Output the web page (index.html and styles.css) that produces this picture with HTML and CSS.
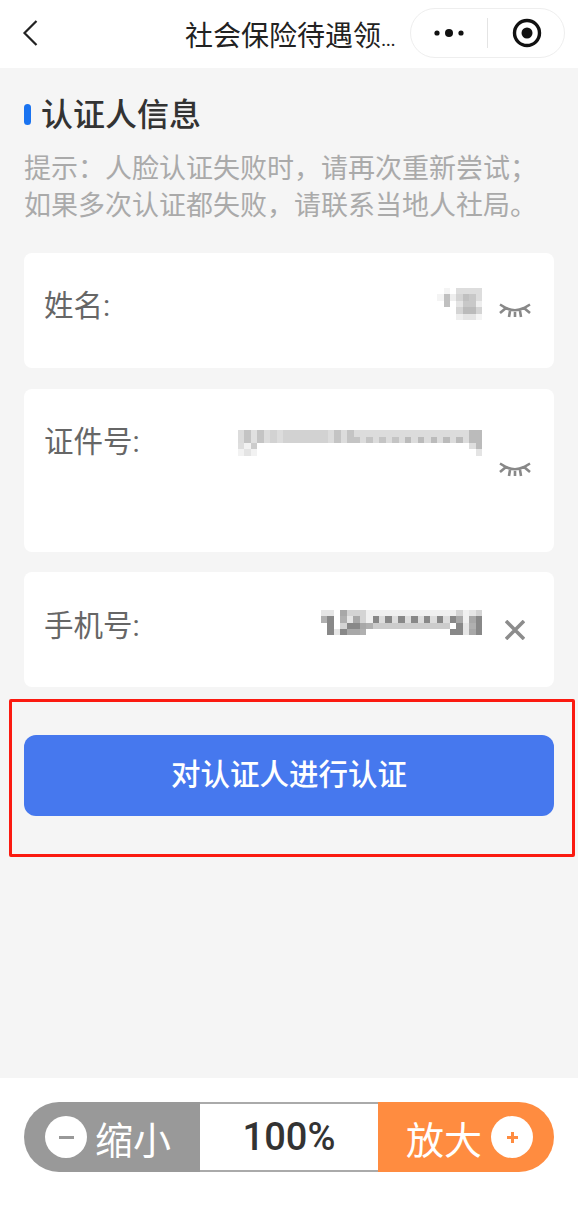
FILE: index.html
```html
<!DOCTYPE html>
<html lang="zh-CN">
<head>
    <meta charset="UTF-8">
    <meta name="viewport" content="width=device-width, initial-scale=1.0">
    <title>社会保险待遇领取</title>
    <link rel="stylesheet" href="styles.css">
</head>
<body>
    <div class="page">
        <div class="nav-bar">
            <svg class="nav-back" width="16" height="28" viewBox="0 0 16 28"><path d="M14.5 2 L2.5 14 L14.5 26" fill="none" stroke="#222" stroke-width="2.2"/></svg>
            <div class="nav-title">社会保险待遇领<span class="nav-dots">...</span></div>
            <div class="capsule">
                <svg class="capsule-dots" width="32" height="10" viewBox="0 0 32 10"><circle cx="4" cy="5" r="2.6" fill="#111"/><circle cx="16" cy="5" r="4" fill="#111"/><circle cx="28" cy="5" r="2.6" fill="#111"/></svg>
                <div class="capsule-line"></div>
                <svg class="capsule-target" width="30" height="30" viewBox="0 0 30 30"><circle cx="15" cy="15" r="12.5" fill="none" stroke="#111" stroke-width="3.4"/><circle cx="15" cy="15" r="5.5" fill="#111"/></svg>
            </div>
        </div>

        <div class="main">
            <div class="section-title">认证人信息</div>
            <div class="hint">提示：人脸认证失败时，请再次重新尝试；<br>如果多次认证都失败，请联系当地人社局。</div>

            <div class="card card-name">
                <div class="card-label">姓名:</div>
                <!-- 打码的姓名 -->
                <svg class="mosaic mosaic-name" width="45" height="32" viewBox="0 0 7 5" shape-rendering="crispEdges">
                    <path fill="#f4f4f4" d="M1 0h1v1h-1z M0 1h1v1h-1z M6 4h1v1h-1z"/>
                    <path fill="#dddddd" d="M3 0h4v1h-4z M6 1h1v1h-1z"/>
                    <path fill="#c0c0c0" d="M1 1h1v2h-1z M4 1h1v1h-1z"/>
                    <path fill="#eeeeee" d="M2 1h1v1h-1z M6 2h1v1h-1z M3 4h1v1h-1z"/>
                    <path fill="#d4d4d4" d="M3 1h1v1h-1z M3 3h1v1h-1z M6 3h1v1h-1z"/>
                    <path fill="#c8c8c8" d="M5 1h1v1h-1z M4 2h2v1h-2z"/>
                    <path fill="#e4e4e4" d="M3 2h1v1h-1z M4 4h2v1h-2z"/>
                    <path fill="#bbbbbb" d="M4 3h2v1h-2z"/>
                </svg>
                <svg class="eye" width="32" height="15" viewBox="0 0 32 15"><path d="M1 1.5 L7 5 Q16 9.5 25 5 L31 1.5 M1 10 L7 5 M31 10 L25 5 M11 8 L10 14 M16 9 L16 14 M21 8 L22 14" fill="none" stroke="#888" stroke-width="2.6"/></svg>
            </div>

            <div class="card card-id">
                <div class="card-label">证件号:</div>
                <!-- 打码的证件号 -->
                <svg class="mosaic mosaic-id" width="244" height="26" viewBox="0 0 38 4" shape-rendering="crispEdges">
                    <path fill="#dcdcdc" d="M0 0h1v2h-1z M4 0h1v2h-1z M6 0h1v2h-1z M14 0h1v2h-1z M16 0h1v2h-1z M18 0h20v1h-20z M19 1h1v1h-1z M21 1h1v1h-1z M23 1h1v1h-1z M25 1h1v1h-1z M27 1h1v1h-1z M29 1h1v1h-1z M31 1h1v1h-1z M33 1h1v1h-1z M35 1h1v1h-1z"/>
                    <path fill="#c4c4c4" d="M1 0h1v2h-1z M3 0h1v2h-1z M15 0h1v2h-1z M17 0h1v2h-1z M18 1h1v1h-1z M20 1h1v1h-1z M22 1h1v1h-1z M24 1h1v1h-1z"/>
                    <path fill="#bbbbbb" d="M26 1h1v1h-1z M28 1h1v1h-1z M30 1h1v1h-1z M32 1h1v1h-1z M34 1h1v1h-1z M36 0h2v2h-2z M37 2h1v1h-1z"/>
                    <path fill="#e0e0e0" d="M2 0h1v2h-1z"/>
                    <path fill="#d2d2d2" d="M5 0h1v2h-1z M7 0h7v2h-7z"/>
                    <path fill="#dedede" d="M0 2h1v1h-1z M36 2h1v1h-1z"/>
                    <path fill="#cccccc" d="M2 2h1v1h-1z"/>
                    <path fill="#f2f2f2" d="M1 2h1v1h-1z M0 3h1v1h-1z M2 3h1v1h-1z"/>
                    <path fill="#e4e4e4" d="M1 3h1v1h-1z M37 3h1v1h-1z"/>
                </svg>
                <svg class="eye" width="32" height="15" viewBox="0 0 32 15"><path d="M1 1.5 L7 5 Q16 9.5 25 5 L31 1.5 M1 10 L7 5 M31 10 L25 5 M11 8 L10 14 M16 9 L16 14 M21 8 L22 14" fill="none" stroke="#888" stroke-width="2.6"/></svg>
            </div>

            <div class="card card-phone">
                <div class="card-label">手机号:</div>
                <!-- 打码的手机号 -->
                <svg class="mosaic mosaic-phone" width="161" height="27" viewBox="0 0 25 4" shape-rendering="crispEdges">
                    <path fill="#e6e6e6" d="M0 0h2v1h-2z M23 0h1v1h-1z M4 1h1v1h-1z M22 2h1v1h-1z M2 3h1v1h-1z M22 3h1v1h-1z"/>
                    <path fill="#a8a8a8" d="M3 0h1v1h-1z M5 1h1v1h-1z M21 1h1v1h-1z M23 1h1v1h-1z M6 2h1v1h-1z M4 3h2v1h-2z M23 3h1v1h-1z"/>
                    <path fill="#d4d4d4" d="M4 0h3v1h-3z M24 0h1v1h-1z M6 1h1v1h-1z M3 2h1v1h-1z M21 0h1v1h-1z"/>
                    <path fill="#f0f0f0" d="M7 0h14v1h-14z M22 0h1v1h-1z M7 1h1v1h-1z M22 1h1v1h-1z"/>
                    <path fill="#b0b0b0" d="M0 1h1v1h-1z M3 1h1v1h-1z M7 2h1v1h-1z M23 2h1v1h-1z M6 3h1v1h-1z"/>
                    <path fill="#888888" d="M1 1h1v3h-1z M8 1h1v1h-1z M10 1h1v1h-1z M12 1h1v1h-1z M14 1h1v1h-1z M16 1h1v1h-1z M18 1h1v1h-1z M20 1h1v1h-1z M24 1h1v3h-1z M4 2h2v1h-2z M3 3h1v1h-1z M20 3h2v1h-2z M21 2h1v1h-1z"/>
                    <path fill="#dddddd" d="M9 1h1v1h-1z M11 1h1v1h-1z M13 1h1v1h-1z M15 1h1v1h-1z M17 1h1v1h-1z M19 1h1v1h-1z"/>
                    <path fill="#cccccc" d="M8 2h12v1h-12z"/>
                </svg>
                <svg class="close" width="20" height="20" viewBox="0 0 20 20"><path d="M1 1 L19 19 M19 1 L1 19" fill="none" stroke="#8c8c8c" stroke-width="3.6"/></svg>
            </div>

            <div class="mark-box">
                <div class="submit-btn">对认证人进行认证</div>
            </div>
        </div>

        <div class="footer">
            <div class="zoom-bar">
                <div class="zoom-btn zoom-out">
                    <span class="zoom-icon"><span class="icon-minus"></span></span>
                    <span>缩小</span>
                </div>
                <div class="zoom-value">100%</div>
                <div class="zoom-btn zoom-in">
                    <span>放大</span>
                    <span class="zoom-icon"><span class="icon-plus"></span></span>
                </div>
            </div>
        </div>
    </div>
</body>
</html>
```

FILE: styles.css
```css
* {
    box-sizing: border-box;
}

body {
    margin: 0;
    padding: 0;
    background-color: #fff;
    font-family: 'Roboto', 'Noto Sans CJK SC', sans-serif;
    overflow: hidden;
}

.page {
    display: flex;
    flex-direction: column;
    height: 1207px;
    background-color: #f5f5f5;
}

/* 顶部导航 */
.nav-bar {
    display: flex;
    align-items: center;
    height: 68px;
    padding: 0 12px 0 22px;
    background-color: #fff;
}

.nav-back {
    margin-top: -2px;
}

.nav-title {
    margin-left: 147px;
    width: 225px;
    font-size: 28px;
    color: #222;
    white-space: nowrap;
}

.nav-dots {
    font-size: 20px;
    letter-spacing: -0.5px;
}

.capsule {
    display: flex;
    align-items: center;
    width: 155px;
    height: 50px;
    margin-top: -2px;
    padding-left: 22px;
    border: 1px solid #eee;
    border-radius: 25px;
    background-color: #fff;
}

.capsule-line {
    width: 1px;
    height: 30px;
    margin-left: 22px;
    background-color: #e4e4e4;
}

.capsule-target {
    margin-left: 24px;
}

/* 内容 */
.main {
    flex: 1;
    padding-top: 27px;
}

.section-title {
    position: relative;
    margin-left: 41px;
    font-size: 32px;
    line-height: 40px;
    font-weight: 500;
    color: #333;
}

.section-title::before {
    content: '';
    position: absolute;
    left: -17px;
    top: 9px;
    width: 7px;
    height: 21px;
    border-radius: 4px;
    background-color: #1a73f0;
}

.hint {
    margin: 16px 24px 28px;
    font-size: 27px;
    line-height: 37px;
    color: #aaa;
    white-space: nowrap;
}

.card {
    display: flex;
    align-items: flex-start;
    margin: 0 24px 20px;
    padding: 35px 24px 0 20px;
    border-radius: 8px;
    background-color: #fff;
}

.card-name {
    height: 115px;
    margin-bottom: 21px;
}

.card-id {
    height: 163px;
}

.card-phone {
    height: 115px;
    margin-bottom: 0;
}

.card-label {
    margin-top: -2px;
    font-size: 29.5px;
    line-height: 40px;
    color: #666;
    white-space: nowrap;
}

.card-phone .card-label {
    margin-top: -1px;
}

.mosaic {
    flex: none;
    margin-left: auto;
    filter: blur(0.6px);
}

.mosaic-id {
    margin-top: 6px;
}

.mosaic-phone {
    margin-top: 2px;
}

.eye {
    flex: none;
    margin: 15px -1px 0 17px;
}

.card-id .eye {
    margin-top: 38px;
}

.close {
    flex: none;
    margin: 13px 5px 0 23px;
}

.mark-box {
    margin: 12px 3px 0 9px;
    height: 158px;
    padding: 33px 18px 0 12px;
    border: 3px solid #fb1a10;
    border-radius: 2px;
}

.submit-btn {
    height: 81px;
    border-radius: 12px;
    background-color: #4678ee;
    color: #fff;
    font-size: 29.5px;
    font-weight: 500;
    line-height: 81px;
    text-align: center;
}

/* 底部缩放条 */
.footer {
    height: 129px;
    padding: 24px 24px 0;
    background-color: #fff;
}

.zoom-bar {
    display: flex;
    height: 70px;
    border-radius: 35px;
    overflow: hidden;
}

.zoom-btn {
    display: flex;
    align-items: center;
    color: #fff;
    font-size: 38px;
}

.zoom-out {
    width: 176px;
    padding-left: 21px;
    gap: 8px;
    background-color: #999;
}

.zoom-in {
    flex: 1;
    justify-content: flex-end;
    padding-right: 21px;
    gap: 9px;
    background-color: #ff8c40;
}

.zoom-value {
    width: 178px;
    border-top: 2px solid #aaa;
    border-bottom: 2px solid #aaa;
    background-color: #fff;
    color: #333;
    font-size: 38px;
    font-weight: 500;
    line-height: 66px;
    text-align: center;
}

.zoom-icon {
    display: flex;
    align-items: center;
    justify-content: center;
    width: 42px;
    height: 42px;
    border-radius: 50%;
    background-color: #fff;
}

.icon-minus {
    width: 15px;
    height: 3px;
    background-color: #999;
}

.icon-plus {
    width: 11px;
    height: 11px;
    background:
        linear-gradient(#ff8c40, #ff8c40) center / 11px 3px no-repeat,
        linear-gradient(#ff8c40, #ff8c40) center / 3px 11px no-repeat;
}
```
